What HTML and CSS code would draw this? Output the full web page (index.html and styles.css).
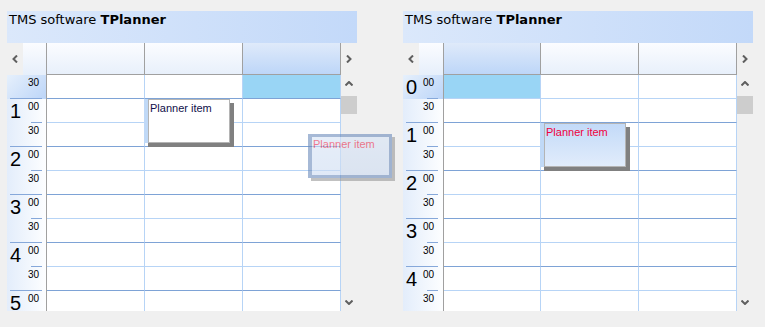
FILE: index.html
```html
<!DOCTYPE html>
<html lang="en">
<head>
    <meta charset="UTF-8">
    <title>TPlanner</title>
    <link rel="stylesheet" href="styles.css">
</head>
<body>
    <div class="page">
        <!-- Left planner: scrolled to 0:30, third column selected -->
        <div class="planner">
            <div class="caption">TMS software <b>TPlanner</b></div>
            <div class="head">
                <div class="nav"><svg width="6" height="8" viewBox="0 0 6 8"><path d="M5 0.5 L1.5 4 L5 7.5" /></svg></div>
                <div class="time-head"></div>
                <div class="col-head"></div>
                <div class="col-head"></div>
                <div class="col-head sel"></div>
                <div class="nav"><svg width="6" height="8" viewBox="0 0 6 8"><path d="M1 0.5 L4.5 4 L1 7.5" /></svg></div>
            </div>
            <div class="body">
                <div class="grid">
                    <div class="row half"><div class="time on"><span class="min">30</span></div><div class="cell"></div><div class="cell"></div><div class="cell on"></div></div>
                    <div class="row hour"><div class="time"><span class="hr">1</span><span class="min">00</span></div><div class="cell"></div><div class="cell">
                        <div class="item"><div class="bar"></div><div class="box">Planner item</div></div>
                    </div><div class="cell"></div></div>
                    <div class="row half"><div class="time"><span class="min">30</span></div><div class="cell"></div><div class="cell"></div><div class="cell"></div></div>
                    <div class="row hour"><div class="time"><span class="hr">2</span><span class="min">00</span></div><div class="cell"></div><div class="cell"></div><div class="cell"></div></div>
                    <div class="row half"><div class="time"><span class="min">30</span></div><div class="cell"></div><div class="cell"></div><div class="cell"></div></div>
                    <div class="row hour"><div class="time"><span class="hr">3</span><span class="min">00</span></div><div class="cell"></div><div class="cell"></div><div class="cell"></div></div>
                    <div class="row half"><div class="time"><span class="min">30</span></div><div class="cell"></div><div class="cell"></div><div class="cell"></div></div>
                    <div class="row hour"><div class="time"><span class="hr">4</span><span class="min">00</span></div><div class="cell"></div><div class="cell"></div><div class="cell"></div></div>
                    <div class="row half"><div class="time"><span class="min">30</span></div><div class="cell"></div><div class="cell"></div><div class="cell"></div></div>
                    <div class="row hour"><div class="time"><span class="hr">5</span><span class="min">00</span></div><div class="cell"></div><div class="cell"></div><div class="cell"></div></div>
                </div>
                <div class="vscroll">
                    <div class="sb-btn"><svg width="8" height="5" viewBox="0 0 8 5"><path d="M0.5 4.5 L4 1 L7.5 4.5" /></svg></div>
                    <div class="thumb"></div>
                    <div class="sb-btn down"><svg width="8" height="5" viewBox="0 0 8 5"><path d="M0.5 0.5 L4 4 L7.5 0.5" /></svg></div>
                </div>
            </div>
        </div>

        <!-- Right planner: scrolled to 0:00, first column selected -->
        <div class="planner right">
            <div class="caption">TMS software <b>TPlanner</b></div>
            <div class="head">
                <div class="nav"><svg width="6" height="8" viewBox="0 0 6 8"><path d="M5 0.5 L1.5 4 L5 7.5" /></svg></div>
                <div class="time-head"></div>
                <div class="col-head sel"></div>
                <div class="col-head"></div>
                <div class="col-head"></div>
                <div class="nav"><svg width="6" height="8" viewBox="0 0 6 8"><path d="M1 0.5 L4.5 4 L1 7.5" /></svg></div>
            </div>
            <div class="body">
                <div class="grid">
                    <div class="row hour"><div class="time on"><span class="hr">0</span><span class="min">00</span></div><div class="cell on"></div><div class="cell"></div><div class="cell"></div></div>
                    <div class="row half"><div class="time"><span class="min">30</span></div><div class="cell"></div><div class="cell"></div><div class="cell"></div></div>
                    <div class="row hour"><div class="time"><span class="hr">1</span><span class="min">00</span></div><div class="cell"></div><div class="cell">
                        <div class="item blue"><div class="bar"></div><div class="box">Planner item</div></div>
                    </div><div class="cell"></div></div>
                    <div class="row half"><div class="time"><span class="min">30</span></div><div class="cell"></div><div class="cell"></div><div class="cell"></div></div>
                    <div class="row hour"><div class="time"><span class="hr">2</span><span class="min">00</span></div><div class="cell"></div><div class="cell"></div><div class="cell"></div></div>
                    <div class="row half"><div class="time"><span class="min">30</span></div><div class="cell"></div><div class="cell"></div><div class="cell"></div></div>
                    <div class="row hour"><div class="time"><span class="hr">3</span><span class="min">00</span></div><div class="cell"></div><div class="cell"></div><div class="cell"></div></div>
                    <div class="row half"><div class="time"><span class="min">30</span></div><div class="cell"></div><div class="cell"></div><div class="cell"></div></div>
                    <div class="row hour"><div class="time"><span class="hr">4</span><span class="min">00</span></div><div class="cell"></div><div class="cell"></div><div class="cell"></div></div>
                    <div class="row half"><div class="time"><span class="min">30</span></div><div class="cell"></div><div class="cell"></div><div class="cell"></div></div>
                </div>
                <div class="vscroll">
                    <div class="sb-btn"><svg width="8" height="5" viewBox="0 0 8 5"><path d="M0.5 4.5 L4 1 L7.5 4.5" /></svg></div>
                    <div class="thumb"></div>
                    <div class="sb-btn down"><svg width="8" height="5" viewBox="0 0 8 5"><path d="M0.5 0.5 L4 4 L7.5 0.5" /></svg></div>
                </div>
            </div>
        </div>

        <!-- item being dragged between the planners -->
        <div class="ghost">Planner item</div>
    </div>
</body>
</html>
```

FILE: styles.css
```css
body {
    margin: 0;
    background-color: #f0f0f0;
    font-family: "Liberation Sans", Arial, sans-serif;
    color: #000;
}
.page {
    position: relative;
    display: flex;
    gap: 46px;
    padding: 11px 0 0 7px;
    height: 327px;
    box-sizing: border-box;
}
.planner {
    width: 350px;
    display: flex;
    flex-direction: column;
}
.caption {
    height: 32px;
    box-sizing: border-box;
    padding: 1px 0 0 2px;
    background: linear-gradient(to right, #dbe8fb, #c3d9f9);
    font-family: "DejaVu Sans", Verdana, sans-serif;
    font-size: 13px;
}

/* column header */
.head {
    display: grid;
    grid-template-columns: 16px 24px 98px 98px 98px 16px;
    height: 32px;
}
.right .head {
    grid-template-columns: 16px 25px 97px 98px 98px 16px;
}
.nav {
    display: flex;
    align-items: center;
    justify-content: center;
    background-color: #f0f0f0;
}
.nav svg path, .sb-btn svg path {
    fill: none;
    stroke: #5f5f5f;
    stroke-width: 2;
}
.time-head {
    background: linear-gradient(#fbfcff, #e6effb);
    border-right: 1px solid #a0a0a0;
}
.col-head {
    background: linear-gradient(#fbfcff, #e8f0fb);
    border-right: 1px solid #a0a0a0;
    border-bottom: 1px solid #a0a0a0;
}
.col-head.sel {
    background: linear-gradient(#dfeafa, #bdd6f8);
}

/* grid */
.body {
    display: flex;
    height: 236px;
    overflow: hidden;
}
.grid {
    flex: 1;
    overflow: hidden;
}
.row {
    display: grid;
    grid-template-columns: 40px 98px 98px 98px;
    height: 24px;
}
.right .row {
    grid-template-columns: 41px 97px 98px 98px;
}
.cell {
    position: relative;
    background-color: #fff;
    border-right: 1px solid #b7d4f6;
    border-bottom: 1px solid #b7d4f6;
}
.row.half .cell {
    border-bottom-color: #7ea3d6;
}
.cell.on {
    background-color: #99d5f5;
}
.time {
    position: relative;
    display: flex;
    align-items: flex-start;
    padding: 2px 7px 0 3px;
    background: linear-gradient(to right, #e3edfb, #fdfeff);
    border-right: 1px solid #a0a0a0;
}
.right .time {
    padding-right: 9px;
}
.time.on {
    background: linear-gradient(135deg, #e6f0fc, #bcd5f8);
}
.row + .row .time::before {
    content: "";
    position: absolute;
    top: -1px;
    left: 3px;
    width: 32px;
    height: 1px;
    background-color: #86a8da;
}
.row + .row.half .time::before {
    left: 24px;
    width: 11px;
}
.hr {
    font-size: 20px;
    line-height: 20px;
}
.min {
    margin-left: auto;
    margin-top: 1px;
    font-size: 10px;
    line-height: 10px;
}

/* vertical scrollbar */
.vscroll {
    width: 16px;
    display: flex;
    flex-direction: column;
    background-color: #f0f0f0;
}
.sb-btn {
    height: 17px;
    display: flex;
    align-items: center;
    justify-content: center;
}
.sb-btn.down {
    margin-top: auto;
}
.thumb {
    height: 18px;
    margin-top: 4px;
    background-color: #cdcdcd;
}

/* planner items */
.item {
    position: absolute;
    left: -1px;
    top: 0;
    z-index: 2;
    width: 86px;
    height: 44px;
    display: flex;
    box-shadow: 4px 4px 0 #808080;
    font-size: 11px;
}
.item .bar {
    width: 4px;
    background-color: #c0d9f7;
}
.item .box {
    flex: 1;
    padding: 2px 1px;
    background-color: #fff;
    border: 1px solid #b4b4b4;
    color: #10104a;
}
.item.blue .box {
    background: linear-gradient(#c3daf8, #e1ecfb);
    color: #f0003c;
}
.ghost {
    position: absolute;
    left: 308px;
    top: 134px;
    z-index: 5;
    width: 84px;
    height: 44px;
    box-sizing: border-box;
    padding: 1px 1px;
    border: 3px solid #6c8cbb;
    border-left-width: 4px;
    background: linear-gradient(#d7e4f6, #cddcf2);
    box-shadow: 3px 3px 0 #989898;
    opacity: 0.6;
    color: #e61e46;
    font-size: 11px;
}
```
